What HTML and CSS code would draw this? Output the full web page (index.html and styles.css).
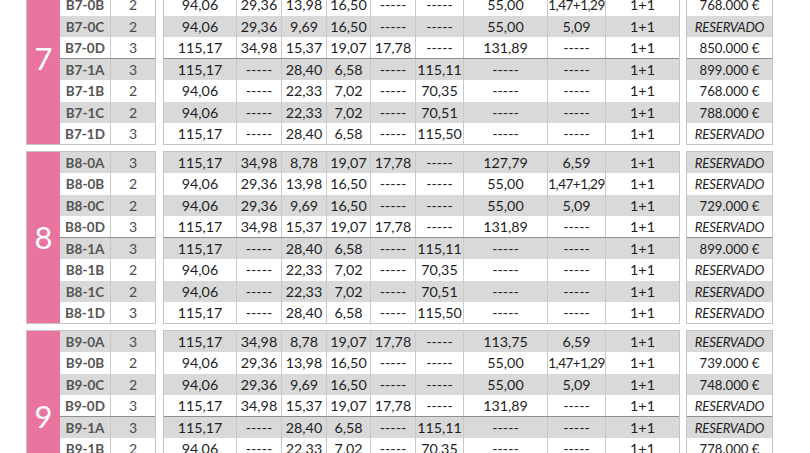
FILE: index.html
```html
<!DOCTYPE html>
<html lang="es">
<head>
<meta charset="utf-8">
<title>Disponibilidad</title>
<link rel="stylesheet" href="styles.css">
</head>
<body>
<div class="sheet">

  <!-- Bloque 7 -->
  <section class="block">
    <div class="tbl t1">
      <div class="num">7</div>
      <div class="rows">
        <div class="row g"><span class="code">B7-0A</span><span class="rooms">3</span></div>
        <div class="row"><span class="code">B7-0B</span><span class="rooms">2</span></div>
        <div class="row g"><span class="code">B7-0C</span><span class="rooms">2</span></div>
        <div class="row"><span class="code">B7-0D</span><span class="rooms">3</span></div>
        <div class="row g sep"><span class="code">B7-1A</span><span class="rooms">3</span></div>
        <div class="row"><span class="code">B7-1B</span><span class="rooms">2</span></div>
        <div class="row g"><span class="code">B7-1C</span><span class="rooms">2</span></div>
        <div class="row"><span class="code">B7-1D</span><span class="rooms">3</span></div>
      </div>
    </div>
    <div class="tbl t2">
      <div class="row g"><span>115,17</span><span>34,98</span><span>8,78</span><span>19,07</span><span>17,78</span><span>-----</span><span>113,75</span><span>6,59</span><span>1+1</span></div>
      <div class="row"><span>94,06</span><span>29,36</span><span>13,98</span><span>16,50</span><span>-----</span><span>-----</span><span>55,00</span><span class="tight">1,47+1,29</span><span>1+1</span></div>
      <div class="row g"><span>94,06</span><span>29,36</span><span>9,69</span><span>16,50</span><span>-----</span><span>-----</span><span>55,00</span><span>5,09</span><span>1+1</span></div>
      <div class="row"><span>115,17</span><span>34,98</span><span>15,37</span><span>19,07</span><span>17,78</span><span>-----</span><span>131,89</span><span>-----</span><span>1+1</span></div>
      <div class="row g sep"><span>115,17</span><span>-----</span><span>28,40</span><span>6,58</span><span>-----</span><span>115,11</span><span>-----</span><span>-----</span><span>1+1</span></div>
      <div class="row"><span>94,06</span><span>-----</span><span>22,33</span><span>7,02</span><span>-----</span><span>70,35</span><span>-----</span><span>-----</span><span>1+1</span></div>
      <div class="row g"><span>94,06</span><span>-----</span><span>22,33</span><span>7,02</span><span>-----</span><span>70,51</span><span>-----</span><span>-----</span><span>1+1</span></div>
      <div class="row"><span>115,17</span><span>-----</span><span>28,40</span><span>6,58</span><span>-----</span><span>115,50</span><span>-----</span><span>-----</span><span>1+1</span></div>
    </div>
    <div class="tbl t3">
      <div class="row g"><span class="res">RESERVADO</span></div>
      <div class="row"><span>768.000 €</span></div>
      <div class="row g"><span class="res">RESERVADO</span></div>
      <div class="row"><span>850.000 €</span></div>
      <div class="row g sep"><span>899.000 €</span></div>
      <div class="row"><span>768.000 €</span></div>
      <div class="row g"><span>788.000 €</span></div>
      <div class="row"><span class="res">RESERVADO</span></div>
    </div>
  </section>

  <!-- Bloque 8 -->
  <section class="block">
    <div class="tbl t1">
      <div class="num">8</div>
      <div class="rows">
        <div class="row g"><span class="code">B8-0A</span><span class="rooms">3</span></div>
        <div class="row"><span class="code">B8-0B</span><span class="rooms">2</span></div>
        <div class="row g"><span class="code">B8-0C</span><span class="rooms">2</span></div>
        <div class="row"><span class="code">B8-0D</span><span class="rooms">3</span></div>
        <div class="row g sep"><span class="code">B8-1A</span><span class="rooms">3</span></div>
        <div class="row"><span class="code">B8-1B</span><span class="rooms">2</span></div>
        <div class="row g"><span class="code">B8-1C</span><span class="rooms">2</span></div>
        <div class="row"><span class="code">B8-1D</span><span class="rooms">3</span></div>
      </div>
    </div>
    <div class="tbl t2">
      <div class="row g"><span>115,17</span><span>34,98</span><span>8,78</span><span>19,07</span><span>17,78</span><span>-----</span><span>127,79</span><span>6,59</span><span>1+1</span></div>
      <div class="row"><span>94,06</span><span>29,36</span><span>13,98</span><span>16,50</span><span>-----</span><span>-----</span><span>55,00</span><span class="tight">1,47+1,29</span><span>1+1</span></div>
      <div class="row g"><span>94,06</span><span>29,36</span><span>9,69</span><span>16,50</span><span>-----</span><span>-----</span><span>55,00</span><span>5,09</span><span>1+1</span></div>
      <div class="row"><span>115,17</span><span>34,98</span><span>15,37</span><span>19,07</span><span>17,78</span><span>-----</span><span>131,89</span><span>-----</span><span>1+1</span></div>
      <div class="row g sep"><span>115,17</span><span>-----</span><span>28,40</span><span>6,58</span><span>-----</span><span>115,11</span><span>-----</span><span>-----</span><span>1+1</span></div>
      <div class="row"><span>94,06</span><span>-----</span><span>22,33</span><span>7,02</span><span>-----</span><span>70,35</span><span>-----</span><span>-----</span><span>1+1</span></div>
      <div class="row g"><span>94,06</span><span>-----</span><span>22,33</span><span>7,02</span><span>-----</span><span>70,51</span><span>-----</span><span>-----</span><span>1+1</span></div>
      <div class="row"><span>115,17</span><span>-----</span><span>28,40</span><span>6,58</span><span>-----</span><span>115,50</span><span>-----</span><span>-----</span><span>1+1</span></div>
    </div>
    <div class="tbl t3">
      <div class="row g"><span class="res">RESERVADO</span></div>
      <div class="row"><span class="res">RESERVADO</span></div>
      <div class="row g"><span>729.000 €</span></div>
      <div class="row"><span class="res">RESERVADO</span></div>
      <div class="row g sep"><span>899.000 €</span></div>
      <div class="row"><span class="res">RESERVADO</span></div>
      <div class="row g"><span class="res">RESERVADO</span></div>
      <div class="row"><span class="res">RESERVADO</span></div>
    </div>
  </section>

  <!-- Bloque 9 -->
  <section class="block">
    <div class="tbl t1">
      <div class="num">9</div>
      <div class="rows">
        <div class="row g"><span class="code">B9-0A</span><span class="rooms">3</span></div>
        <div class="row"><span class="code">B9-0B</span><span class="rooms">2</span></div>
        <div class="row g"><span class="code">B9-0C</span><span class="rooms">2</span></div>
        <div class="row"><span class="code">B9-0D</span><span class="rooms">3</span></div>
        <div class="row g sep"><span class="code">B9-1A</span><span class="rooms">3</span></div>
        <div class="row"><span class="code">B9-1B</span><span class="rooms">2</span></div>
        <div class="row g"><span class="code">B9-1C</span><span class="rooms">2</span></div>
        <div class="row"><span class="code">B9-1D</span><span class="rooms">3</span></div>
      </div>
    </div>
    <div class="tbl t2">
      <div class="row g"><span>115,17</span><span>34,98</span><span>8,78</span><span>19,07</span><span>17,78</span><span>-----</span><span>113,75</span><span>6,59</span><span>1+1</span></div>
      <div class="row"><span>94,06</span><span>29,36</span><span>13,98</span><span>16,50</span><span>-----</span><span>-----</span><span>55,00</span><span class="tight">1,47+1,29</span><span>1+1</span></div>
      <div class="row g"><span>94,06</span><span>29,36</span><span>9,69</span><span>16,50</span><span>-----</span><span>-----</span><span>55,00</span><span>5,09</span><span>1+1</span></div>
      <div class="row"><span>115,17</span><span>34,98</span><span>15,37</span><span>19,07</span><span>17,78</span><span>-----</span><span>131,89</span><span>-----</span><span>1+1</span></div>
      <div class="row g sep"><span>115,17</span><span>-----</span><span>28,40</span><span>6,58</span><span>-----</span><span>115,11</span><span>-----</span><span>-----</span><span>1+1</span></div>
      <div class="row"><span>94,06</span><span>-----</span><span>22,33</span><span>7,02</span><span>-----</span><span>70,35</span><span>-----</span><span>-----</span><span>1+1</span></div>
      <div class="row g"><span>94,06</span><span>-----</span><span>22,33</span><span>7,02</span><span>-----</span><span>70,51</span><span>-----</span><span>-----</span><span>1+1</span></div>
      <div class="row"><span>115,17</span><span>-----</span><span>28,40</span><span>6,58</span><span>-----</span><span>115,50</span><span>-----</span><span>-----</span><span>1+1</span></div>
    </div>
    <div class="tbl t3">
      <div class="row g"><span class="res">RESERVADO</span></div>
      <div class="row"><span>739.000 €</span></div>
      <div class="row g"><span>748.000 €</span></div>
      <div class="row"><span class="res">RESERVADO</span></div>
      <div class="row g sep"><span class="res">RESERVADO</span></div>
      <div class="row"><span>778.000 €</span></div>
      <div class="row g"><span class="res">RESERVADO</span></div>
      <div class="row"><span class="res">RESERVADO</span></div>
    </div>
  </section>

</div>
</body>
</html>
```

FILE: styles.css
```css
html, body {
  margin: 0;
  padding: 0;
  background: #ffffff;
  overflow: hidden;
}

body {
  font-family: Lato, "Open Sans", "Liberation Sans", sans-serif;
  font-size: 13.5px;
  color: #1e1e1e;
}

.sheet {
  margin-top: -28px;
  padding-left: 26px;
  display: flex;
  flex-direction: column;
  gap: 6px;
}

.block {
  display: flex;
  align-items: stretch;
}

.tbl {
  border: 1px solid #c4c4c4;
  box-sizing: border-box;
  background: #ffffff;
}

.t1 {
  width: 130px;
  display: flex;
}

.t2 {
  width: 517px;
  margin-left: 7px;
  display: flex;
  flex-direction: column;
  font-size: 14.3px;
}

.t3 {
  width: 87px;
  margin-left: 6px;
  display: flex;
  flex-direction: column;
  font-size: 13.2px;
}

.num {
  width: 33px;
  flex: none;
  background: #e9749f;
  color: #ffffff;
  font-size: 31px;
  display: flex;
  align-items: center;
  justify-content: center;
  padding-bottom: 2px;
  box-sizing: border-box;
}

.rows {
  flex: 1;
  display: flex;
  flex-direction: column;
}

.row {
  display: grid;
  height: 21.25px;
  line-height: 22px;
  text-align: center;
  white-space: nowrap;
}

.row.g {
  background: #d9d9d9;
}

.row.sep {
  border-top: 1px solid #8e8e8e;
}

.row > span {
  display: block;
  border-left: 1px solid #c9c9c9;
  overflow: hidden;
}

.row > span:first-child {
  border-left: none;
}

.t1 .row {
  grid-template-columns: 50px 45px;
}

.t2 .row {
  grid-template-columns: 72px 45px 45px 44px 45px 48px 84px 58px 74px;
}

.t3 .row {
  grid-template-columns: 85px;
}

.code {
  font-weight: 700;
  color: #555555;
}

.rooms {
  color: #4a4a4a;
  font-size: 14px;
}

.res {
  font-style: italic;
  letter-spacing: -0.2px;
}

.tight {
  font-size: 13.5px;
  letter-spacing: -0.5px;
}
```
